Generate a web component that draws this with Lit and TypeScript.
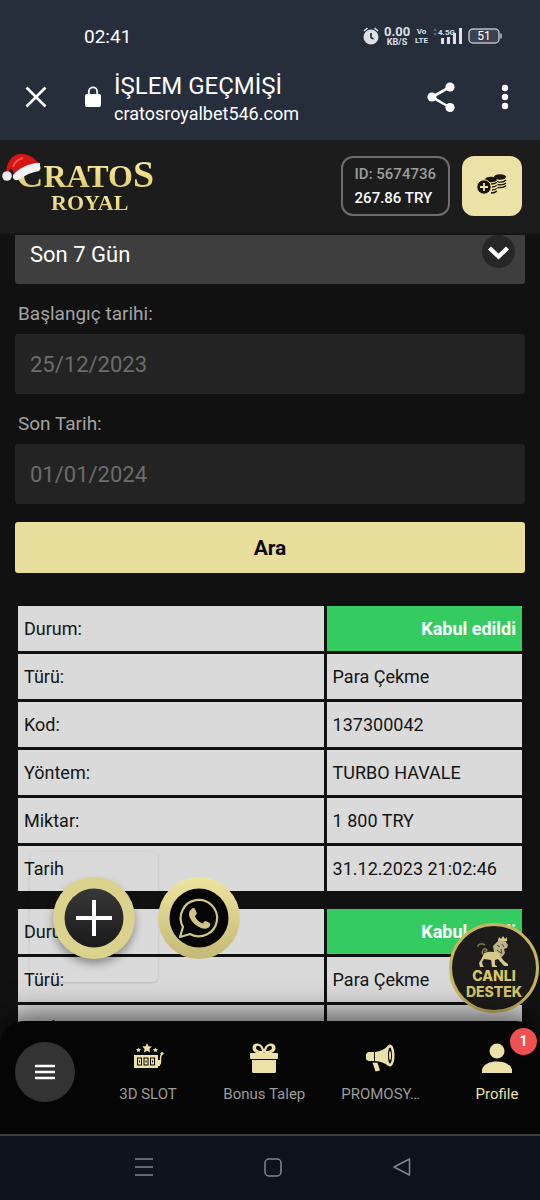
import { LitElement, html, css, svg } from "lit";
import { customElement, property } from "lit/decorators.js";
import { classMap } from "lit/directives/class-map.js";

interface Row {
  label: string;
  value: string;
  status?: boolean;
}

const transactions: Row[][] = [
  [
    { label: "Durum:", value: "Kabul edildi", status: true },
    { label: "Türü:", value: "Para Çekme" },
    { label: "Kod:", value: "137300042" },
    { label: "Yöntem:", value: "TURBO HAVALE" },
    { label: "Miktar:", value: "1 800 TRY" },
    { label: "Tarih", value: "31.12.2023 21:02:46" },
  ],
  [
    { label: "Durum:", value: "Kabul edildi", status: true },
    { label: "Türü:", value: "Para Çekme" },
    { label: "Kod:", value: "136150396" },
  ],
];

const slotIcon = svg`
  <path d="M14 0l1.500 3.200 3.400.4-2.500 2.400.7 3.500-3.100-1.700-3.100 1.700.7-3.500-2.500-2.400 3.400-.4z"/>
  <path d="M5.500 4.500l.8 1.500 1.700.2-1.200 1.200.3 1.700-1.600-.8-1.600.8.3-1.700L3 6.200 4.700 6zM22.500 4.500l.8 1.500 1.700.2-1.200 1.200.3 1.700-1.600-.8-1.600.8.3-1.700-1.200-1.200 1.700-.2z"/>
  <path fill-rule="evenodd" d="M1 12h24v13H1zM4 14.500v8h5v-8zM10.500 14.500v8h5v-8zM17 14.500v8h5v-8z"/>
  <path fill-rule="evenodd" d="M5 15.500h3v6H5zM6 17.500v2h1v-2zM11.500 15.500h3v6h-3zM12.500 17.500v2h1v-2zM18 15.500h3v6h-3zM19 17.500v2h1v-2z"/>
  <path d="M26 21.500c2 0 1.500-3 1.500-6 0-2 .5-4 2-4.500" fill="none" stroke="currentColor" stroke-width="1.400"/>
  <circle cx="29" cy="10.500" r="1.600"/><rect x="25" y="17" width="2" height="6"/>`;

const giftIcon = svg`
  <path fill-rule="evenodd" d="M15 9.500C11 12 3 10 3.500 4.500 4-1.500 13-1 15 6.500 17-1 26-1.500 26.500 4.500 27 10 19 12 15 9.500zM13 8C12 3 8.500 1.500 7.300 3.800 6.500 6 8.500 8.500 13 8zM17 8c1-5 4.500-6.500 5.700-4.200C23.500 6 21.500 8.500 17 8z"/>
  <rect x="1" y="10" width="28" height="6" rx="1"/>
  <path d="M3 17h24v11.500a1.500 1.500 0 0 1-1.500 1.500h-21a1.500 1.500 0 0 1-1.500-1.500z"/>`;

const promoIcon = svg`
  <path d="M2 9h6v9H2.500L0 16.500V11z"/>
  <path d="M9 9c5-.5 10-3 13.500-6.500-2.500 6-2.500 15 0 20.500C19 20 14 18.500 9 18z"/>
  <path fill-rule="evenodd" d="M24 1.500c3 0 4.500 5.500 4.500 11s-1.500 11-4.500 11-4.500-5.500-4.500-11 1.500-11 4.500-11zm0 3c-1.200 0-2 4-2 8s.8 8 2 8 2-4 2-8-.8-8-2-8z"/>
  <ellipse cx="24" cy="12.500" rx="1" ry="4.500"/>
  <path d="M6.500 19.500l5 .3 2.500 7.700-4.500 1z"/>`;

const profileIcon = svg`
  <circle cx="15" cy="8" r="7.500"/>
  <path d="M0 30v-3.500C1.500 21 8 18.500 15 18.500S28.500 21 30 26.500V30z"/>`;

const navItems = [
  { label: "3D SLOT", icon: slotIcon },
  { label: "Bonus Talep", icon: giftIcon },
  { label: "PROMOSY…", icon: promoIcon },
  { label: "Profile", icon: profileIcon, badge: 1, active: true },
];

@customElement("phone-chrome")
class PhoneChrome extends LitElement {
  static styles = css`
    :host { display: block; background: #262d3b; color: #fff; height: 140px; }
    .status { display: flex; align-items: center; justify-content: space-between; height: 72px; padding: 0 38px 0 84px; }
    .clock { font-size: 19px; }
    .signals { display: flex; align-items: center; gap: 5px; color: #dde0e6; }
    .stack { display: flex; flex-direction: column; align-items: center; font-weight: 700; font-size: 9px; line-height: 10px; }
    .stack .speed { font-size: 13px; line-height: 11px; }
    .stack.lte { font-size: 8px; line-height: 9px; }
    .bar { display: flex; align-items: center; height: 50px; padding: 0 26px 0 24px; }
    button { background: none; border: 0; padding: 0; color: inherit; display: grid; place-items: center; }
    .lock { margin: 0 12px 0 36px; }
    .site { flex: 1; min-width: 0; padding-top: 4px; }
    .title { font-size: 24px; line-height: 30px; }
    .url { font-size: 18px; line-height: 26px; }
    .actions { display: flex; gap: 40px; }
  `;

  render() {
    return html`
      <div class="status">
        <span class="clock">02:41</span>
        <div class="signals">
          <svg width="16" height="18" viewBox="0 0 16 18" fill="currentColor">
            <circle cx="8" cy="10" r="7.500"/>
            <path d="M1 4l3.500-3M15 4l-3.500-3" stroke="currentColor" stroke-width="1.600"/>
            <path d="M8 6v4.500l2.500 1.500" fill="none" stroke="#262d3b" stroke-width="1.700"/>
          </svg>
          <div class="stack"><span class="speed">0.00</span><span>KB/S</span></div>
          <div class="stack lte"><span>Vo</span><span>LTE</span></div>
          <svg width="30" height="18" viewBox="0 0 30 18" fill="currentColor">
            <path d="M0 4l2-3 2 3zM0 6l2 3 2-3z" opacity=".3"/>
            <rect x="8" y="11" width="3" height="6"/><rect x="14" y="10" width="3" height="7"/>
            <rect x="20" y="6" width="3" height="11"/><rect x="26" y="1" width="3" height="16"/>
            <text x="5" y="8" font-size="8" font-weight="700" font-family="Roboto">4.5G</text>
          </svg>
          <svg width="34" height="18" viewBox="0 0 34 18">
            <rect x="1" y="2" width="30" height="14" rx="4" fill="#3b4250" stroke="#b9bdc5" stroke-width="1.500"/>
            <path d="M33 6.500v5" stroke="#b9bdc5" stroke-width="1.500"/>
            <text x="16" y="13" text-anchor="middle" font-size="12" fill="#fff" font-family="Roboto">51</text>
          </svg>
        </div>
      </div>
      <div class="bar">
        <button aria-label="Kapat">
          <svg width="24" height="24" viewBox="0 0 24 24" stroke="#fff" stroke-width="2.600"><path d="M2.500 2.500l19 19M21.500 2.500l-19 19"/></svg>
        </button>
        <svg class="lock" width="18" height="22" viewBox="0 0 18 22"><rect x="1" y="8" width="16" height="13" rx="2" fill="#fff"/><path d="M4.800 9V5.500a4.200 4.200 0 0 1 8.400 0V9" fill="none" stroke="#fff" stroke-width="1.800"/></svg>
        <div class="site">
          <div class="title">İŞLEM GEÇMİŞİ</div>
          <div class="url">cratosroyalbet546.com</div>
        </div>
        <div class="actions">
          <button aria-label="Paylaş">
            <svg width="30" height="32" viewBox="0 0 30 32" fill="#fff"><path d="M24 6L6 16l18 10.500" fill="none" stroke="#fff" stroke-width="2.600"/><circle cx="24" cy="6" r="4.600"/><circle cx="6" cy="16" r="4.600"/><circle cx="24" cy="26.500" r="4.600"/></svg>
          </button>
          <button aria-label="Menü">
            <svg width="18" height="26" viewBox="0 0 18 26" fill="#fff"><circle cx="9" cy="4" r="3.200"/><circle cx="9" cy="13" r="3.200"/><circle cx="9" cy="22" r="3.200"/></svg>
          </button>
        </div>
      </div>
    `;
  }
}

@customElement("site-header")
class SiteHeader extends LitElement {
  static styles = css`
    :host { display: flex; align-items: center; gap: 12px; height: 95px; box-sizing: border-box; padding: 0 18px 2px 16px; background: #1c1c1c; border-bottom: 2px solid #151515; position: relative; z-index: 2; }
    .logo { position: relative; flex: 1; text-decoration: none; font-family: "Liberation Serif", serif; font-weight: 700; }
    .brand, .royal { display: block; width: max-content; background: linear-gradient(#f9f2a8, #e0c868); background-clip: text; -webkit-background-clip: text; color: transparent; }
    .brand { font-size: 32px; line-height: 32px; }
    .cap { font-size: 38px; line-height: 32px; }
    .royal { margin-left: 35px; font-size: 22px; line-height: 22px; }
    .hat { position: absolute; left: -15px; top: -5px; }
    .account { box-sizing: border-box; height: 60px; border: 2px solid #6d6d6d; border-radius: 12px; padding: 4px 12px; font-size: 15px; line-height: 24px; font-weight: 500; color: #fff; white-space: nowrap; }
    .id { color: #9c9c9c; }
    .deposit { width: 60px; height: 60px; border: 0; padding: 0; border-radius: 12px; background: #ece1a6; display: grid; place-items: center; }
    .deposit svg { margin-bottom: 4px; }
  `;

  render() {
    return html`
      <a class="logo" href="#">
        <span class="brand"><span class="cap">C</span>RATO<span class="cap">S</span></span>
        <span class="royal">ROYAL</span>
        <svg class="hat" width="42" height="32" viewBox="0 0 42 32">
          <path d="M5 22C5 9 11 1 20 1c10 0 16 6 18 12L13 25C13 19 12 15 9 16z" fill="#d91414"/>
          <path d="M12 14c2-5 5-8 10-9" fill="none" stroke="#f1544b" stroke-width="2"/>
          <path d="M14 20c6-6 14-9 21-10 4 0 6 6 3 8-7 1-14 4-21 9-5 1-7-4-3-7z" fill="#f3f3f6"/>
          <circle cx="6" cy="23" r="4.800" fill="#eeeef2"/>
        </svg>
      </a>
      <div class="account">
        <div class="id">ID: 5674736</div>
        <div>267.86 TRY</div>
      </div>
      <button class="deposit" aria-label="Para yatır">
        <svg width="30" height="22" viewBox="0 0 30 22" fill="#17150c">
          <ellipse cx="23" cy="4" rx="6" ry="2.800"/>
          <ellipse cx="14" cy="6.500" rx="6" ry="2.800"/>
          <path d="M20 8.500c3 1 7 .5 9-1.500M20.500 11.500c3 .8 6.500.3 8.500-1.500M20.500 14.500c3 .5 6.500 0 8.500-2M14 11c2.500 0 4.500-.6 5.800-1.800M15 14c2 0 3.800-.6 4.800-1.600M15 17c2 0 3.800-.6 4.800-1.600M14 20c2.500 0 4.800-.8 5.800-2" fill="none" stroke="#17150c" stroke-width="1.300"/>
          <circle cx="7" cy="14" r="7.200" stroke="#ece1a6"/>
          <path d="M7 10v8M3 14h8" stroke="#ece1a6" stroke-width="1.800"/>
        </svg>
      </button>
    `;
  }
}

@customElement("transaction-table")
class TransactionTable extends LitElement {
  @property({ attribute: false }) rows: Row[] = [];

  static styles = css`
    :host { display: block; }
    table { width: 100%; border-spacing: 3px; table-layout: fixed; font-size: 18px; line-height: 21px; color: #141414; }
    .name { width: 61%; }
    th, td { box-sizing: border-box; height: 45px; padding: 0 6px; background: #dadada; text-align: left; font-weight: 400; }
    .accepted { background: #34cc60; color: #fff; font-weight: 700; text-align: right; }
  `;

  render() {
    return html`
      <table>
        <colgroup><col class="name"><col></colgroup>
        <tbody>
          ${this.rows.map((row) => html`
            <tr>
              <th scope="row">${row.label}</th>
              <td class=${classMap({ accepted: !!row.status })}>${row.value}</td>
            </tr>`)}
        </tbody>
      </table>
    `;
  }
}

@customElement("bottom-nav")
class BottomNav extends LitElement {
  static styles = css`
    :host { display: flex; height: 113px; box-sizing: border-box; padding-left: 15px; background: #050505; border-radius: 24px 24px 0 0; position: relative; z-index: 2; box-shadow: 0 -4px 32px rgba(0, 0, 0, 0.7); }
    .menu { flex: none; width: 60px; height: 60px; margin-top: 21px; border: 0; padding: 0; border-radius: 50%; background: #333; display: grid; place-items: center; }
    .items { flex: 1; display: grid; grid-template-columns: repeat(4, 86px); justify-content: space-between; margin-left: 30px; padding-top: 22px; }
    .item { position: relative; display: flex; flex-direction: column; align-items: center; gap: 11px; color: #9b9b9b; font-size: 15px; line-height: 20px; text-decoration: none; white-space: nowrap; }
    .item svg { color: #ece1a6; fill: currentColor; overflow: visible; }
    .active { color: #ece1a6; }
    .badge { position: absolute; top: -15px; right: 3px; width: 27px; height: 27px; line-height: 27px; border-radius: 50%; background: #ef5152; color: #fff; font-size: 14px; font-weight: 700; text-align: center; }
  `;

  render() {
    return html`
      <button class="menu" aria-label="Menü">
        <svg width="20" height="16" viewBox="0 0 20 16" stroke="#fff" stroke-width="2.400"><path d="M0 2h20M0 8h20M0 14h20"/></svg>
      </button>
      <nav class="items">
        ${navItems.map((item) => html`
          <a href="#" class=${classMap({ item: true, active: !!item.active })}>
            <svg width="30" height="30" viewBox="0 0 30 30">${item.icon}</svg>
            <span>${item.label}</span>
            ${item.badge ? html`<span class="badge">${item.badge}</span>` : ""}
          </a>`)}
      </nav>
    `;
  }
}

@customElement("app-root")
class AppRoot extends LitElement {
  static styles = css`
    :host { display: flex; flex-direction: column; height: 100vh; overflow: hidden; background: #111; font-family: Roboto, "Noto Sans", sans-serif; }
    phone-chrome, site-header, bottom-nav, .system { flex: none; }
    main { position: relative; flex: 1; min-height: 0; margin: -11px 0 -24px; overflow: hidden; padding: 0 15px; }
    .picker { position: relative; }
    select, input, .search { display: block; box-sizing: border-box; width: 100%; border: 0; border-radius: 3px; font-family: inherit; }
    select, input { height: 60px; padding: 0 15px; font-size: 22px; }
    select { appearance: none; background: #3e3e3e; color: #fff; }
    input { background: #232323; color: #6c6c6c; }
    .chevron { position: absolute; right: 10px; top: 11px; pointer-events: none; }
    label { display: block; margin: 18px 3px 8px; font-size: 19px; line-height: 24px; color: #a3a3a3; }
    .search { height: 51px; margin: 18px 0 30px; background: #e9df9c; color: #0b0b0b; font-size: 21px; font-weight: 700; }
    .list { display: flex; flex-direction: column; gap: 12px; }
    .ghost { position: absolute; left: 30px; bottom: 63px; width: 128px; height: 130px; border-radius: 6px; box-shadow: 0 1px 3px rgba(0, 0, 0, 0.14); }
    .round { position: absolute; box-sizing: border-box; border: 0; padding: 0; border-radius: 50%; display: grid; place-items: center; }
    .add, .chat { bottom: 86px; width: 82px; height: 82px; }
    .add { left: 53px; background: #dbd28d; box-shadow: 0 5px 9px rgba(0, 0, 0, 0.35); }
    .chat { left: 158px; background: linear-gradient(#f0e59f, #c3b874); }
    .live { right: 1px; bottom: 32px; width: 90px; height: 90px; border: 3px solid #c9b55b; background: #1d1c1a; color: #d9c667; font-family: Inter, sans-serif; font-size: 14px; line-height: 16px; font-weight: 800; align-content: center; }
    .system { display: flex; justify-content: space-between; align-items: center; height: 66px; box-sizing: border-box; padding: 0 128px 0 134px; border-top: 2px solid #3a3f43; background: #0c131a; position: relative; z-index: 2; }
    .system button { background: none; border: 0; padding: 0; height: 20px; }
  `;

  render() {
    return html`
      <phone-chrome></phone-chrome>
      <site-header></site-header>
      <main>
        <div class="picker">
          <select aria-label="Son 7 Gün"><option>Son 7 Gün</option></select>
          <svg class="chevron" width="33" height="33" viewBox="0 0 33 33"><circle cx="16.500" cy="16.500" r="16.500" fill="#262626"/><path d="M7.500 13l9 8.500 9-8.500" fill="none" stroke="#fff" stroke-width="4.400"/></svg>
        </div>
        <label for="start">Başlangıç tarihi:</label>
        <input id="start" type="text" value="25/12/2023">
        <label for="end">Son Tarih:</label>
        <input id="end" type="text" value="01/01/2024">
        <button class="search">Ara</button>
        <div class="list">
          ${transactions.map((rows) => html`<transaction-table .rows=${rows}></transaction-table>`)}
        </div>
        <div class="ghost"></div>
        <button class="round add" aria-label="Ekle">
          <svg width="60" height="60" viewBox="0 0 60 60"><defs><linearGradient id="dark" x2="0" y2="1"><stop stop-color="#393838"/><stop offset="1" stop-color="#1b1a1a"/></linearGradient></defs><circle cx="30" cy="30" r="29.500" fill="url(#dark)"/><path d="M30 12v36M12 30h36" stroke="#fff" stroke-width="4"/></svg>
        </button>
        <button class="round chat" aria-label="WhatsApp">
          <svg width="60" height="60" viewBox="0 0 60 60">
            <circle cx="30" cy="30" r="29.500" fill="#050505"/>
            <path d="M11 49l3-10A18.200 18.200 0 1 1 21 46z" fill="none" stroke="#d0c587" stroke-width="2.200" stroke-linejoin="round"/>
            <path d="M23 20.500c1-.8 2.500-.8 3 .4l1.800 4.200c.3 1-1.500 2.500-1.800 3.300 1.500 3.300 4 5.500 7.500 7 1-.3 2-2.500 3-2.400l4.200 2c1.200.8.5 3-.5 4-2.500 2.500-6 2-9.200.5-4.500-2-8-5.500-10-9.500-1.500-3-1.500-6.500 2-9.500z" fill="#d0c587"/>
          </svg>
        </button>
        <button class="round live">
          <svg width="38" height="32" viewBox="0 0 38 32" fill="#d6ca8b">
            <path d="M23 4l1-3 2 2 2-3 2 3 2-2v4l-9 1z"/>
            <path d="M22 6c2-2 7-2 9 0l2 3-1 3-3 1 1 4-3 4-5-1-3-4-1-6z" fill="#bdb388"/>
            <path d="M9 17c5-2 9-1 13-1l4 5 3 4 4 3v2h-4l-6-7-3 1 0 5 2 1v1h-5l-1-7-7-1-2 3 1 4 1 1H5l-1-4 3-5z"/>
            <path d="M9 19C5 16 9 12 11 13s1 3-2 2M3 11c-1-3 4-4 7-2" fill="none" stroke="#8d8458" stroke-width="1.300"/>
            <path d="M22 9l3 2M27 8l2 3M22 14l4 3M26 13l1 5" stroke="#4a4638" stroke-width="1"/>
          </svg>
          <span>CANLI</span><span>DESTEK</span>
        </button>
      </main>
      <bottom-nav></bottom-nav>
      <div class="system">
        <button aria-label="Son uygulamalar"><svg width="20" height="20" viewBox="0 0 20 20" stroke="#80868b" stroke-width="1.500"><path d="M1 1h18M1 9h18M1 17h18"/></svg></button>
        <button aria-label="Ana ekran"><svg width="20" height="20" viewBox="0 0 20 20" fill="none" stroke="#80868b" stroke-width="1.500"><rect x="2" y="1" width="16" height="17" rx="4"/></svg></button>
        <button aria-label="Geri"><svg width="20" height="20" viewBox="0 0 20 20" fill="none" stroke="#80868b" stroke-width="1.500" stroke-linejoin="round"><path d="M17.500 1v16L2 9z"/></svg></button>
      </div>
    `;
  }
}
